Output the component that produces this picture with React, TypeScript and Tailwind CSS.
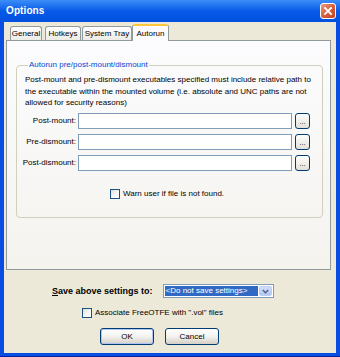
import React from "react";

function XPButton({ children, w, def }: { children: React.ReactNode; w: string; def?: boolean }) {
  return (
    <div
      className={`${w} h-[17px] rounded-[3px] border border-[#003C74] bg-gradient-to-b from-[#FFFFFF] via-[#F3F2EE] to-[#D6D0C5] flex items-center justify-center ${
        def ? "shadow-[inset_0_0_0_1px_#AFC6F3]" : ""
      }`}
    >
      <span>{children}</span>
    </div>
  );
}

function CheckBox() {
  return (
    <div className="w-[10px] h-[10px] border border-[#1C5180] bg-gradient-to-br from-[#DCDCD7] via-[#F5F5F2] to-[#FFFFFF] shrink-0" />
  );
}

function PathRow({ label }: { label: string }) {
  return (
    <div className="flex items-center h-[16px]">
      <div className="w-[59px] text-right shrink-0">{label}</div>
      <div className="ml-[2px] w-[214px] h-[16px] border border-[#7F9DB9] bg-white" />
      <div className="ml-[3px] w-[15px] h-[16px] rounded-[3px] border border-[#003C74] bg-gradient-to-b from-[#FFFFFF] to-[#E3E0D6] flex items-end justify-center pb-[3px]">
        <span className="text-[7px] leading-none">...</span>
      </div>
    </div>
  );
}

export default function App() {
  return (
    <div className="w-[340px] h-[357px] flex flex-col bg-[#0A4DE2] border-b border-[#00249C] font-['Liberation_Sans',Arial,sans-serif] text-[8px] leading-none text-black overflow-hidden">
      {/* Title bar */}
      <div className="h-[22px] shrink-0 flex items-center pl-[6px] pr-[4px] bg-gradient-to-b from-[#3B8DF8] via-[#0759E8] to-[#0151DF]">
        <span className="text-white font-bold text-[10px] tracking-[0.1px]">Options</span>
        <div className="ml-auto w-[16px] h-[16px] rounded-[3px] border border-white bg-gradient-to-br from-[#EA9A82] via-[#D7603E] to-[#C2421F] flex items-center justify-center">
          <svg width="10" height="10" viewBox="0 0 10 10">
            <path d="M2 2 L8 8 M8 2 L2 8" stroke="white" strokeWidth="1.8" strokeLinecap="square" />
          </svg>
        </div>
      </div>

      {/* Client area */}
      <div className="flex-1 mx-[4px] mb-[3px] bg-[#ECE9D8] flex flex-col">
        {/* Tabs */}
        <div className="mt-[2px] h-[16px] flex items-end pl-[6px]">
          <div className="w-[32px] h-[14px] border border-b-0 border-[#919B9C] rounded-t-[3px] bg-gradient-to-b from-[#FFFFFF] to-[#ECEBE6] flex items-center justify-center">
            General
          </div>
          <div className="ml-[3px] w-[36px] h-[14px] border border-b-0 border-[#919B9C] rounded-t-[3px] bg-gradient-to-b from-[#FFFFFF] to-[#ECEBE6] flex items-center justify-center">
            Hotkeys
          </div>
          <div className="ml-[1px] w-[50px] h-[14px] border border-b-0 border-[#919B9C] rounded-t-[3px] bg-gradient-to-b from-[#FFFFFF] to-[#ECEBE6] flex items-center justify-center">
            System Tray
          </div>
          <div className="relative z-10 mb-[-1px] w-[37px] h-[17px] border-x border-[#919B9C] border-t-2 border-t-[#FFC73C] rounded-t-[3px] bg-[#FCFCFE] flex items-center justify-center">
            Autorun
          </div>
        </div>

        {/* Tab panel */}
        <div className="ml-[2px] w-[325px] h-[230px] border border-[#919B9C] bg-gradient-to-b from-[#FCFCFE] to-[#F4F3EE] flex flex-col">
          <fieldset className="mt-[20px] ml-[9px] w-[307px] h-[157px] border border-[#D0D0BF] rounded-[4px] px-[8px] pt-[5px]">
            <legend className="ml-[3px] px-[1px] text-[#0046D5]">Autorun pre/post-mount/dismount</legend>
            <div className="leading-[11.5px]">
              Post-mount and pre-dismount executables specified must include relative path to
              <br />
              the executable within the mounted volume (i.e. absolute and UNC paths are not
              <br />
              allowed for security reasons)
            </div>
            <div className="mt-[4px] ml-[-8px] flex flex-col gap-[5px]">
              <PathRow label="Post-mount:" />
              <PathRow label="Pre-dismount:" />
              <PathRow label="Post-dismount:" />
            </div>
            <div className="mt-[18px] ml-[85px] flex items-center gap-[3px]">
              <CheckBox />
              <span>Warn user if file is not found.</span>
            </div>
          </fieldset>
        </div>

        {/* Save settings row */}
        <div className="mt-[14px] ml-[48px] flex items-center h-[14px]">
          <span className="font-bold text-[9px]">
            <span className="underline">S</span>ave above settings to:
          </span>
          <div className="ml-[10px] w-[111px] h-[14px] border border-[#7F9DB9] bg-white flex p-[1px]">
            <div className="flex-1 bg-[#316AC5] text-white flex items-center pl-[1px]">&lt;Do not save settings&gt;</div>
            <div className="ml-[1px] w-[13px] rounded-[2px] bg-gradient-to-b from-[#D2DEFB] to-[#B3C7F4] border border-[#BCCDF5] flex items-center justify-center">
              <svg width="7" height="5" viewBox="0 0 7 5">
                <path d="M0.8 1 L3.5 3.7 L6.2 1" stroke="#4D6185" strokeWidth="1.4" fill="none" />
              </svg>
            </div>
          </div>
        </div>

        {/* Associate row */}
        <div className="mt-[10px] ml-[78px] flex items-center gap-[3px]">
          <CheckBox />
          <span>Associate FreeOTFE with ".vol" files</span>
        </div>

        {/* Buttons */}
        <div className="mt-[10px] ml-[96px] flex gap-[11px]">
          <XPButton w="w-[54px]" def>
            OK
          </XPButton>
          <XPButton w="w-[54px]">Cancel</XPButton>
        </div>
      </div>
    </div>
  );
}
